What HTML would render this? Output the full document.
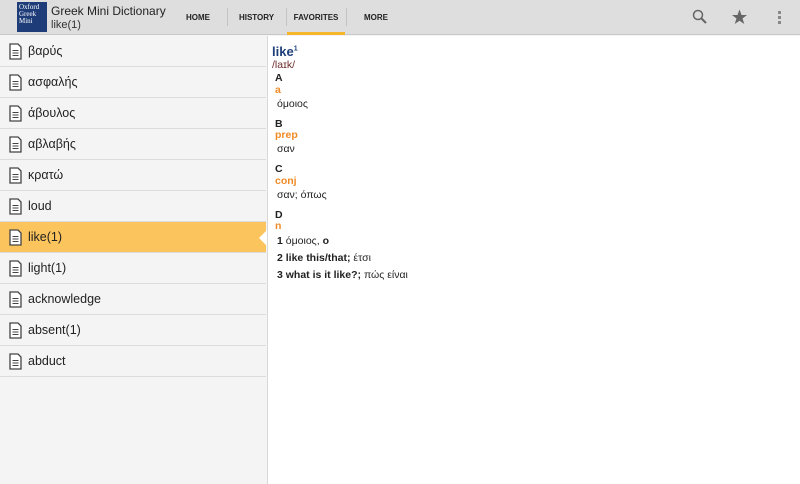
<!DOCTYPE html>
<html><head><meta charset="utf-8"><style>
*{margin:0;padding:0;box-sizing:border-box}
body{width:800px;height:484px;overflow:hidden;font-family:"Liberation Sans",sans-serif;background:#f4f4f4;position:relative}
.top{position:absolute;left:0;top:0;width:800px;height:35px;background:#dedede;border-bottom:1px solid #c8c8c8}
.logo{position:absolute;left:17px;top:2px;width:30px;height:30px;background:#1d3c78;color:#fff;font-family:"Liberation Serif",serif;font-size:7px;line-height:7px;padding:2px}
.title{position:absolute;left:51px;top:4px;font-size:12px;color:#222}
.sub{position:absolute;left:51px;top:19px;font-size:11px;color:#333}
.tab{position:absolute;top:0;height:35px;font-size:8px;font-weight:bold;color:#222;line-height:35px;text-align:center}
.sep{position:absolute;top:8px;width:1px;height:18px;background:#c4c4c4}
.list{position:absolute;left:0;top:36px;width:266px}
.row{height:31px;border-bottom:1px solid #dcdcdc;position:relative;font-size:12.5px;color:#222;line-height:31px;padding-left:28px}
.row.sel{background:#fcc45c}
.row svg{position:absolute;left:9px;top:7px}
.right{position:absolute;left:267px;top:36px;width:533px;height:448px;background:#fff;border-left:1px solid #d8d8d8}
.ct{position:absolute;left:272px;font-size:10.5px;color:#222}
.b{font-weight:bold}
.o{color:#f08a24;font-weight:bold}
</style></head><body>
<svg width="0" height="0" style="position:absolute"><defs><g id="d"><path d="M1 1H9L12 4V16H1Z" fill="#fff" stroke="#444" stroke-width="1.3"/><path d="M3.5 7.5H9.5M3.5 10H9.5M3.5 12.5H9.5" stroke="#444" stroke-width="1"/></g></defs></svg>
<div class="top">
<div class="logo">Oxford<br>Greek<br>Mini</div>
<div class="title">Greek Mini Dictionary</div>
<div class="sub">like(1)</div>
<div class="tab" style="left:170px;width:56px">HOME</div>
<div class="sep" style="left:227px"></div>
<div class="tab" style="left:228px;width:57px">HISTORY</div>
<div class="sep" style="left:286px"></div>
<div class="tab" style="left:287px;width:58px">FAVORITES</div>
<div style="position:absolute;left:287px;top:32px;width:58px;height:3px;background:#f6b52a"></div>
<div class="sep" style="left:346px"></div>
<div class="tab" style="left:347px;width:58px">MORE</div>
<svg style="position:absolute;left:692px;top:9px" width="16" height="16"><circle cx="6" cy="6" r="4.5" fill="none" stroke="#666" stroke-width="1.5"/><path d="M9.5 9.5L14 14" stroke="#666" stroke-width="2"/></svg>
<svg style="position:absolute;left:731px;top:9px" width="17" height="16"><path d="M8.5 0.5L10.5 6H16L11.5 9.5L13.3 15L8.5 11.7L3.7 15L5.5 9.5L1 6H6.5Z" fill="#666"/></svg>
<div style="position:absolute;left:778px;top:11px;width:3px;height:3px;background:#888;box-shadow:0 5px #888,0 10px #888"></div>
</div>
<div class="list">
<div class="row"><svg width="14" height="18"><use href="#d"/></svg>βαρύς</div>
<div class="row"><svg width="14" height="18"><use href="#d"/></svg>ασφαλής</div>
<div class="row"><svg width="14" height="18"><use href="#d"/></svg>άβουλος</div>
<div class="row"><svg width="14" height="18"><use href="#d"/></svg>αβλαβής</div>
<div class="row"><svg width="14" height="18"><use href="#d"/></svg>κρατώ</div>
<div class="row"><svg width="14" height="18"><use href="#d"/></svg>loud</div>
<div class="row sel"><svg width="14" height="18"><use href="#d"/></svg>like(1)</div>
<div class="row"><svg width="14" height="18"><use href="#d"/></svg>light(1)</div>
<div class="row"><svg width="14" height="18"><use href="#d"/></svg>acknowledge</div>
<div class="row"><svg width="14" height="18"><use href="#d"/></svg>absent(1)</div>
<div class="row"><svg width="14" height="18"><use href="#d"/></svg>abduct</div>
</div>
<div class="right"></div>
<div style="position:absolute;left:259px;top:230px;width:0;height:0;border-top:8px solid transparent;border-bottom:8px solid transparent;border-right:8px solid #fff"></div>
<div class="ct" style="top:44px;font-size:13px;color:#1f3f7a;font-weight:bold">like<sup style="font-size:7px">1</sup></div>
<div class="ct" style="top:59px;color:#6b2a2a">/laɪk/</div>
<div class="ct b" style="top:72px;left:275px">A</div>
<div class="ct o" style="top:84px;left:275px">a</div>
<div class="ct" style="top:98px;left:277px">όμοιος</div>
<div class="ct b" style="top:118px;left:275px">B</div>
<div class="ct o" style="top:129px;left:275px">prep</div>
<div class="ct" style="top:143px;left:277px">σαν</div>
<div class="ct b" style="top:163px;left:275px">C</div>
<div class="ct o" style="top:175px;left:275px">conj</div>
<div class="ct" style="top:189px;left:277px">σαν; όπως</div>
<div class="ct b" style="top:209px;left:275px">D</div>
<div class="ct o" style="top:220px;left:275px">n</div>
<div class="ct" style="top:235px;left:277px"><b>1</b> όμοιος, <b>ο</b></div>
<div class="ct" style="top:252px;left:277px"><b>2 like this/that;</b> έτσι</div>
<div class="ct" style="top:269px;left:277px"><b>3 what is it like?;</b> πώς είναι</div>
</body></html>
